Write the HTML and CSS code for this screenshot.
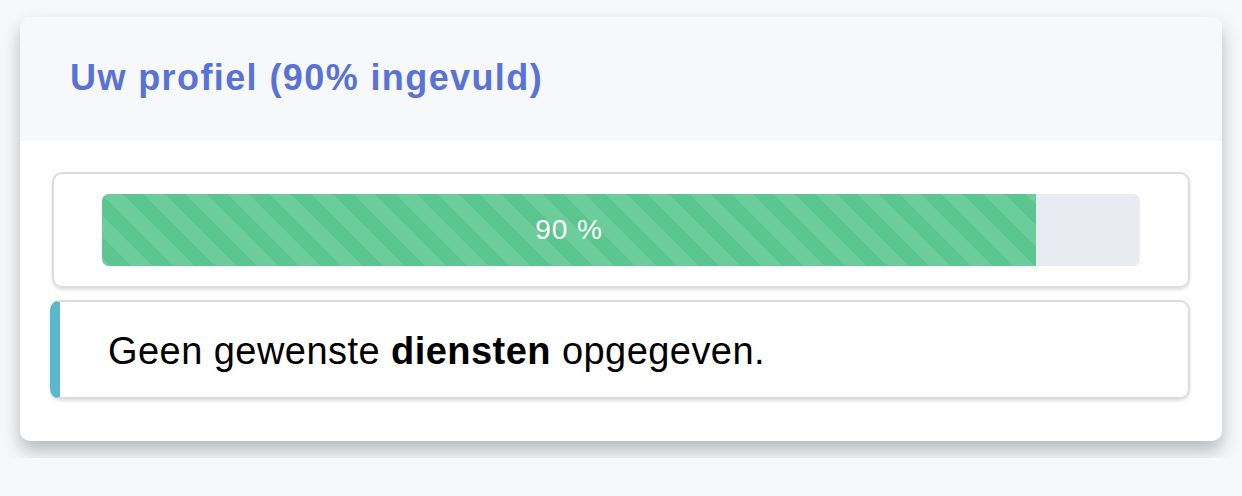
FILE: index.html
```html
<!DOCTYPE html>
<html lang="nl">

<head>
   <meta charset="UTF-8">
   <title>Uw profiel</title>
   <link rel="stylesheet" href="styles.css">
</head>

<body>
   <div class="card">
      <!-- Kaart kop -->
      <div class="card-header">
         <h3>Uw profiel (90% ingevuld)</h3>
      </div>
      <div class="card-body">
         <!-- Voortgang -->
         <div class="panel">
            <div class="progress">
               <div class="progress-bar" style="width: 90%">90 %</div>
            </div>
         </div>
         <!-- Melding -->
         <div class="callout">
            Geen gewenste <strong>diensten</strong> opgegeven.
         </div>
      </div>
   </div>
</body>

</html>
```

FILE: styles.css
```css
/* Pagina */
body {
   font-family: "Liberation Sans", Arial, sans-serif;
   margin: 0;
   padding: 17px 20px;
   background-color: #f7f8fa;
}

/* Kaart */
.card {
   background: #ffffff;
   border-radius: 10px;
   box-shadow: 0 10px 18px rgba(0, 0, 0, 0.25);
   overflow: hidden;
}

.card-header {
   background-color: #f7f8fa;
   height: 124px;
   display: flex;
   align-items: center;
   padding: 0 50px;
}

.card-header h3 {
   margin: 0 0 2px;
   color: #5872d6;
   font-size: 36px;
   letter-spacing: 1.4px;
   font-weight: bold;
}

.card-body {
   padding: 31px 32px 42px 30px;
   display: flex;
   flex-direction: column;
   gap: 12px;
}

/* Voortgang paneel */
.panel {
   margin-left: 2px;
   border: 2px solid #dcdcdc;
   border-radius: 10px;
   box-shadow: 0 2px 3px rgba(0, 0, 0, 0.12);
   padding: 20px 48px;
}

.progress {
   height: 72px;
   background-color: #eaeaf2;
   border-radius: 7px;
   overflow: hidden;
   display: flex;
}

.progress-bar {
   display: flex;
   align-items: center;
   justify-content: center;
   color: #ffffff;
   font-size: 28px;
   letter-spacing: 1px;
   background-color: #5cc690;
   background-image: linear-gradient(45deg,
         rgba(255, 255, 255, 0.1) 25%, transparent 25%,
         transparent 50%, rgba(255, 255, 255, 0.1) 50%,
         rgba(255, 255, 255, 0.1) 75%, transparent 75%,
         transparent);
   background-size: 42px 42px;
}

/* Melding */
.callout {
   border: 2px solid #dcdcdc;
   border-left: 10px solid #5bb8cc;
   border-radius: 10px;
   box-shadow: 0 2px 3px rgba(0, 0, 0, 0.12);
   padding: 28px 48px 24px;
   font-size: 38px;
   letter-spacing: 0.45px;
   color: #000000;
}
```
